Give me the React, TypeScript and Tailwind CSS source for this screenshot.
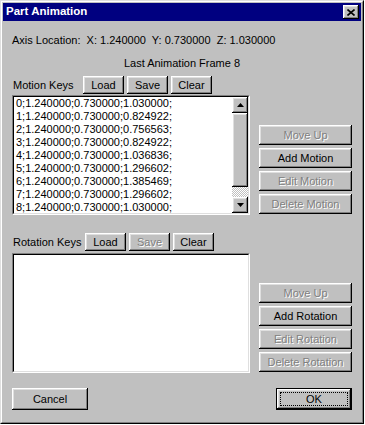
import React from "react";

const bevel =
  "bg-[#c0c0c0] shadow-[inset_-1px_-1px_0_#000,inset_1px_1px_0_#fff,inset_-2px_-2px_0_#808080,inset_2px_2px_0_#dfdfdf]";

function Btn({
  children,
  disabled,
  className = "",
}: {
  children?: React.ReactNode;
  disabled?: boolean;
  className?: string;
}) {
  return (
    <div
      className={`flex items-center justify-center text-[11px] leading-none ${bevel} ${
        disabled ? "text-[#808080] [text-shadow:1px_1px_0_#fff]" : "text-black"
      } ${className}`}
    >
      {children}
    </div>
  );
}

function Arrow({ up }: { up?: boolean }) {
  return (
    <svg width="7" height="4" viewBox="0 0 7 4">
      <polygon points={up ? "3.5,0 7,4 0,4" : "0,0 7,0 3.5,4"} fill="#000" />
    </svg>
  );
}

const motionKeys = [
  "0;1.240000;0.730000;1.030000;",
  "1;1.240000;0.730000;0.824922;",
  "2;1.240000;0.730000;0.756563;",
  "3;1.240000;0.730000;0.824922;",
  "4;1.240000;0.730000;1.036836;",
  "5;1.240000;0.730000;1.296602;",
  "6;1.240000;0.730000;1.385469;",
  "7;1.240000;0.730000;1.296602;",
  "8;1.240000;0.730000;1.030000;",
];

function Sunken({ children }: { children?: React.ReactNode }) {
  return (
    <div className="w-[238px] h-[120px] border border-t-[#808080] border-l-[#808080] border-r-white border-b-white">
      <div className="w-full h-full border border-t-black border-l-black border-r-[#dfdfdf] border-b-[#dfdfdf] bg-white flex">
        {children}
      </div>
    </div>
  );
}

function Header({
  label,
  labelW,
  saveDisabled,
}: {
  label: string;
  labelW: string;
  saveDisabled?: boolean;
}) {
  return (
    <div className="h-[18px] flex items-center">
      <div className={`${labelW} pl-[1px] text-[11px]`}>{label}</div>
      <div className="flex gap-[3px]">
        <Btn className="w-[41px] h-[18px]">Load</Btn>
        <Btn className="w-[41px] h-[18px]" disabled={saveDisabled}>
          Save
        </Btn>
        <Btn className="w-[41px] h-[18px]">Clear</Btn>
      </div>
    </div>
  );
}

export default function App() {
  return (
    <div className="w-[365px] h-[425px] bg-white font-['Liberation_Sans',Arial,sans-serif] text-black">
      <div className="w-[364px] h-[424px] border border-t-[#dfdfdf] border-l-[#dfdfdf] border-r-black border-b-black">
        <div className="w-full h-full border border-t-white border-l-white border-r-[#808080] border-b-[#808080] p-[1px] bg-[#c0c0c0] flex flex-col">
          {/* Title bar */}
          <div className="h-[18px] bg-[#000080] flex items-center justify-between pl-[3px] pr-[2px]">
            <span className="text-white font-bold text-[11.5px] leading-none">Part Animation</span>
            <div className={`w-[16px] h-[14px] flex items-center justify-center ${bevel}`}>
              <svg width="8" height="7" viewBox="0 0 8 7">
                <path d="M0.5 0.5 L7.5 6.5 M7.5 0.5 L0.5 6.5" stroke="#000" strokeWidth="1.6" />
              </svg>
            </div>
          </div>

          <div className="flex flex-col px-[9px]">
            <div className="mt-[12px] h-[14px] leading-[14px] text-[11px] whitespace-pre">
              {"Axis Location:  X: 1.240000  Y: 0.730000  Z: 1.030000"}
            </div>
            <div className="mt-[9px] h-[14px] leading-[14px] text-[11px] text-center">
              Last Animation Frame 8
            </div>

            <div className="mt-[6px]">
              <Header label="Motion Keys" labelW="w-[71px]" />
            </div>
            <div className="mt-[1px] h-[120px] flex justify-between">
              <Sunken>
                <div className="flex-1 pl-[2px] text-[11px] leading-[13px] whitespace-pre">
                  {motionKeys.map((k) => (
                    <div key={k} className="h-[13px]">
                      {k}
                    </div>
                  ))}
                </div>
                <div className="w-[16px] h-full flex flex-col">
                  <div className={`h-[16px] flex items-center justify-center ${bevel}`}>
                    <Arrow up />
                  </div>
                  <div className={`h-[74px] ${bevel}`} />
                  <div className="flex-1 bg-[repeating-conic-gradient(#ffffff_0_25%,#c0c0c0_0_50%)] bg-[length:2px_2px]" />
                  <div className={`h-[16px] flex items-center justify-center ${bevel}`}>
                    <Arrow />
                  </div>
                </div>
              </Sunken>
              <div className="w-[93px] flex flex-col justify-end gap-[3px] pb-[1px]">
                <Btn className="h-[20px]" disabled>Move Up</Btn>
                <Btn className="h-[20px]">Add Motion</Btn>
                <Btn className="h-[20px]" disabled>Edit Motion</Btn>
                <Btn className="h-[20px]" disabled>Delete Motion</Btn>
              </div>
            </div>

            <div className="mt-[18px]">
              <Header label="Rotation Keys" labelW="w-[73px]" saveDisabled />
            </div>
            <div className="mt-[2px] h-[120px] flex justify-between">
              <Sunken />
              <div className="w-[93px] flex flex-col justify-end gap-[3px] pb-[1px]">
                <Btn className="h-[20px]" disabled>Move Up</Btn>
                <Btn className="h-[20px]">Add Rotation</Btn>
                <Btn className="h-[20px]" disabled>Edit Rotation</Btn>
                <Btn className="h-[20px]" disabled>Delete Rotation</Btn>
              </div>
            </div>

            <div className="mt-[15px] h-[22px] flex justify-between">
              <Btn className="w-[76px] h-[22px]">Cancel</Btn>
              <div className="w-[76px] h-[22px] border border-black">
                <div className={`relative w-full h-full flex items-center justify-center text-[11px] ${bevel}`}>
                  OK
                  <div className="absolute inset-[3px] border border-dotted border-black" />
                </div>
              </div>
            </div>
          </div>
        </div>
      </div>
    </div>
  );
}
